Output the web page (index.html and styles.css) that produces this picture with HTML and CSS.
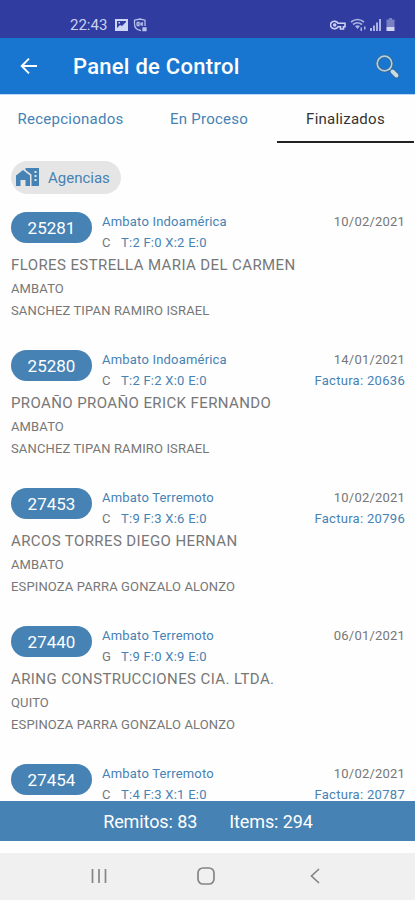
FILE: index.html
```html
<!DOCTYPE html>
<html lang="es">
<head>
    <meta charset="UTF-8">
    <meta name="viewport" content="width=device-width, initial-scale=1.0">
    <title>Panel de Control</title>
    <link rel="stylesheet" href="styles.css">
</head>
<body>
    <div class="screen">
        <div class="status-bar">
            <span class="clock">22:43</span>
            <svg class="status-image" width="13" height="13" viewBox="0 0 13 13">
                <path fill="#cfd5f5" fill-rule="evenodd" d="M0 1h13v12H0zM2 3v7l3-3 2 1 4-4V3zM3.500 4h1.500v1.500H3.500z"/>
            </svg>
            <svg class="status-app" width="14" height="14" viewBox="0 0 14 14" fill="none" stroke="#b9c1ec" stroke-width="1.300">
                <path d="M8 12.500C4 12 1.500 10 1.500 6V2.200L7 1l5 1.200V8M4 4.500v3M4 4.500h2v3H4M8 4.500v3M10 4.500L8.500 6 10 7.500"/>
                <path fill="#b9c1ec" d="M10 10h3v2.500h-3z"/>
            </svg>
            <div class="status-right">
                <svg width="16" height="12" viewBox="0 0 16 12" fill="none" stroke="#cdd3f4" stroke-width="1.600">
                    <path d="M8 4.200A4 3.700 0 1 0 8 7.800h2.500V10h3V7.800H15V4.200z"/>
                    <circle cx="4.700" cy="6" r="1"/>
                </svg>
                <svg width="16" height="14" viewBox="0 0 16 14" fill="none" stroke="#aab3e2" stroke-width="1.700">
                    <path d="M1 4Q7.500-1 14 4M3 6.500Q7.500 3 12 6.500"/>
                    <path fill="#aab3e2" stroke="none" d="M5 8Q7.500 6.500 10 8L7.500 11zM10.500 9.500H12V13h-1.500zM14 8.500h1.500v3H14z"/>
                </svg>
                <svg width="12" height="13" viewBox="0 0 12 13" fill="#aab3e2">
                    <path d="M0 10h2v3H0zM3 7.500h2V13H3zM6 4.500h2V13H6zM9 1h2v12H9z"/>
                </svg>
                <svg width="9" height="13" viewBox="0 0 9 13">
                    <path fill="#7880c3" d="M3 0h3v1.500h2.500V9h-8V1.500H3z"/>
                    <path fill="#d2d6f2" d="M.5 9h8v4h-8z"/>
                </svg>
            </div>
        </div>

        <header class="app-bar">
            <svg class="back" width="18" height="18" viewBox="0 0 18 18" fill="none" stroke="#fff" stroke-width="1.900">
                <path d="M17 9H2.500M9 1.700L1.700 9 9 16.300"/>
            </svg>
            <h1>Panel de Control</h1>
            <svg class="search" width="25" height="25" viewBox="0 0 25 25" fill="none">
                <circle cx="9.500" cy="9.500" r="7.300" stroke="#31678f" stroke-width="3.200"/>
                <circle cx="9.500" cy="9.500" r="7.300" stroke="#b5cddb" stroke-width="1.700"/>
                <path stroke="#b5cddb" stroke-width="2" d="M14.500 14.500l3 3"/>
                <path stroke="#31678f" stroke-width="5.500" stroke-linecap="round" d="M17.500 17.500l4 4"/>
                <path stroke="#c9dae5" stroke-width="4" stroke-linecap="round" d="M17.500 17.500l4 4"/>
            </svg>
        </header>

        <nav class="tabs">
            <span class="tab">Recepcionados</span>
            <span class="tab">En Proceso</span>
            <span class="tab active">Finalizados</span>
        </nav>

        <main class="content">
            <div class="chip">
                <svg width="23" height="19" viewBox="0 0 23 19" fill="#4682b4">
                    <path d="M0 7.500L7 2l7 5.500V18H9.500v-6h-5v6H0z"/>
                    <path fill-rule="evenodd" d="M9.500 0H23v18h-7.500V6.500l-6-4.500zM18.500 3v2h2V3zM18.500 7v2h2V7zM18.500 11v2h2v-2z"/>
                </svg>
                <span>Agencias</span>
            </div>

            <div class="item">
                <div class="item-head">
                    <span class="number">25281</span>
                    <div class="agency">
                        <p class="agency-name">Ambato Indoamérica</p>
                        <p class="totals"><span class="type">C</span>T:2 F:0 X:2 E:0</p>
                    </div>
                    <div class="info">
                        <p class="date">10/02/2021</p>
                    </div>
                </div>
                <p class="client">FLORES ESTRELLA MARIA DEL CARMEN</p>
                <p class="city">AMBATO</p>
                <p class="seller">SANCHEZ TIPAN RAMIRO ISRAEL</p>
            </div>

            <div class="item">
                <div class="item-head">
                    <span class="number">25280</span>
                    <div class="agency">
                        <p class="agency-name">Ambato Indoamérica</p>
                        <p class="totals"><span class="type">C</span>T:2 F:2 X:0 E:0</p>
                    </div>
                    <div class="info">
                        <p class="date">14/01/2021</p>
                        <p class="invoice">Factura: 20636</p>
                    </div>
                </div>
                <p class="client">PROAÑO PROAÑO ERICK FERNANDO</p>
                <p class="city">AMBATO</p>
                <p class="seller">SANCHEZ TIPAN RAMIRO ISRAEL</p>
            </div>

            <div class="item">
                <div class="item-head">
                    <span class="number">27453</span>
                    <div class="agency">
                        <p class="agency-name">Ambato Terremoto</p>
                        <p class="totals"><span class="type">C</span>T:9 F:3 X:6 E:0</p>
                    </div>
                    <div class="info">
                        <p class="date">10/02/2021</p>
                        <p class="invoice">Factura: 20796</p>
                    </div>
                </div>
                <p class="client">ARCOS TORRES DIEGO HERNAN</p>
                <p class="city">AMBATO</p>
                <p class="seller">ESPINOZA PARRA GONZALO ALONZO</p>
            </div>

            <div class="item">
                <div class="item-head">
                    <span class="number">27440</span>
                    <div class="agency">
                        <p class="agency-name">Ambato Terremoto</p>
                        <p class="totals"><span class="type">G</span>T:9 F:0 X:9 E:0</p>
                    </div>
                    <div class="info">
                        <p class="date">06/01/2021</p>
                    </div>
                </div>
                <p class="client">ARING CONSTRUCCIONES CIA. LTDA.</p>
                <p class="city">QUITO</p>
                <p class="seller">ESPINOZA PARRA GONZALO ALONZO</p>
            </div>

            <div class="item">
                <div class="item-head">
                    <span class="number">27454</span>
                    <div class="agency">
                        <p class="agency-name">Ambato Terremoto</p>
                        <p class="totals"><span class="type">C</span>T:4 F:3 X:1 E:0</p>
                    </div>
                    <div class="info">
                        <p class="date">10/02/2021</p>
                        <p class="invoice">Factura: 20787</p>
                    </div>
                </div>
            </div>
        </main>

        <footer class="summary">
            <span>Remitos: 83</span>
            <span>Items: 294</span>
        </footer>

        <div class="nav-bar">
            <svg width="16" height="16" viewBox="0 0 16 16" stroke="#858585" stroke-width="1.700">
                <path d="M1.500 1v14M8 1v14M14.500 1v14"/>
            </svg>
            <svg class="home" width="18" height="18" viewBox="0 0 18 18" fill="none" stroke="#858585" stroke-width="1.700">
                <rect x="1" y="1" width="16" height="16" rx="5"/>
            </svg>
            <svg width="10" height="16" viewBox="0 0 10 16" fill="none" stroke="#858585" stroke-width="1.700">
                <path d="M9 1L1.500 8 9 15"/>
            </svg>
        </div>
    </div>
</body>
</html>
```
FILE: styles.css
```css
* {
    box-sizing: border-box;
}
body {
    margin: 0;
    font-family: Roboto, sans-serif;
    background-color: #fefefe;
}
h1, p {
    margin: 0;
}
svg {
    display: block;
    flex-shrink: 0;
}
.screen {
    width: 415px;
    height: 900px;
    display: flex;
    flex-direction: column;
    overflow: hidden;
    white-space: nowrap;
}
.status-bar {
    height: 38px;
    flex-shrink: 0;
    padding: 11px 20px 0 70px;
    display: flex;
    align-items: center;
    background-color: #303c9f;
}
.clock {
    font-size: 15px;
    color: #cbd1f3;
}
.status-image {
    margin-left: 8px;
}
.status-app {
    margin-left: 5px;
}
.status-right {
    margin-left: auto;
    display: flex;
    align-items: center;
    gap: 4px;
}
.app-bar {
    height: 57px;
    flex-shrink: 0;
    padding: 0 15px 0 20px;
    display: flex;
    align-items: center;
    background-color: #1976d0;
    border-bottom: 1px solid #b9d8f5;
}
h1 {
    margin-left: 35px;
    padding-top: 1px;
    font-size: 22px;
    font-weight: 500;
    letter-spacing: 0.25px;
    color: #fff;
}
.search {
    margin-left: auto;
}
.tabs {
    height: 48px;
    flex-shrink: 0;
    display: grid;
    grid-template-columns: 141px 136px 137px;
}
.tab {
    height: 48px;
    font-size: 15px;
    line-height: 48px;
    text-align: center;
    letter-spacing: 0.25px;
    color: #4682b4;
}
.active {
    color: #333;
    border-bottom: 2px solid #222;
}
.content {
    flex: 1;
    min-height: 0;
    padding: 18px 10px 0 11px;
    overflow: hidden;
}
.chip {
    width: 110px;
    height: 33px;
    margin-bottom: 18px;
    padding-left: 5px;
    display: flex;
    align-items: center;
    gap: 9px;
    border-radius: 17px;
    background-color: #e5e5e5;
    color: #4682b4;
    font-size: 15px;
}
.item {
    height: 138px;
    color: #777;
}
.item-head {
    height: 41px;
    display: flex;
}
.number {
    width: 81px;
    height: 31px;
    margin-right: 10px;
    border-radius: 16px;
    background-color: #4682b4;
    color: #fff;
    font-size: 17px;
    line-height: 32px;
    text-align: center;
}
.agency-name, .totals, .date, .invoice {
    font-size: 13px;
    line-height: 20px;
}
.totals, .invoice {
    line-height: 22px;
}
.agency-name, .totals, .invoice {
    color: #4682b4;
}
.agency-name {
    letter-spacing: 0.2px;
}
.totals {
    letter-spacing: 0.25px;
}
.type {
    display: inline-block;
    width: 19px;
    color: #777;
}
.info {
    margin-left: auto;
    text-align: right;
}
.date {
    letter-spacing: 0.2px;
}
.invoice {
    letter-spacing: 0.3px;
}
.client {
    font-size: 15px;
    line-height: 24px;
    letter-spacing: 0.4px;
}
.city, .seller {
    font-size: 13px;
    line-height: 23px;
    letter-spacing: 0.14px;
}
.seller {
    line-height: 22px;
}
.summary {
    height: 40px;
    flex-shrink: 0;
    margin-bottom: 12px;
    padding-left: 1px;
    display: flex;
    align-items: center;
    justify-content: center;
    gap: 32px;
    background-color: #4682b4;
    color: #fff;
    font-size: 18px;
    letter-spacing: -0.1px;
}
.nav-bar {
    height: 47px;
    flex-shrink: 0;
    padding: 0 95px 1px 91px;
    display: flex;
    align-items: center;
    justify-content: space-between;
    background-color: #f0f0f0;
}
.home {
    margin-right: 5px;
}
```
